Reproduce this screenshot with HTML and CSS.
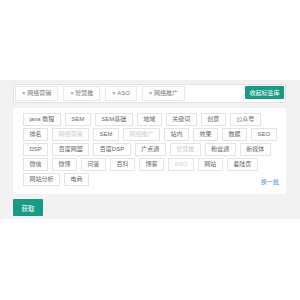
FILE: index.html
```html
<!DOCTYPE html>
<html lang="zh-CN">
<head>
  <meta charset="UTF-8" />
  <meta name="viewport" content="width=device-width, initial-scale=1.0"/>
  <title>标签选择</title>
  <link rel="stylesheet" href="styles.css">
</head>
<body>
  <div class="section">
    <div class="picked">
      <div class="picked-tags">
        <span class="chip">× 网络营销</span>
        <span class="chip">× 智慧推</span>
        <span class="chip">× ASO</span>
        <span class="chip">× 网络推广</span>
      </div>
      <button class="btn btn-small">收起标签库</button>
    </div>

    <div class="library">
      <span class="tag">java 教程</span>
      <span class="tag">SEM</span>
      <span class="tag">SEM基础</span>
      <span class="tag">地域</span>
      <span class="tag">关键词</span>
      <span class="tag">创意</span>
      <span class="tag">公众号</span>

      <span class="tag">排名</span>
      <span class="tag off">网络营销</span>
      <span class="tag">SEM</span>
      <span class="tag off">网络推广</span>
      <span class="tag">站内</span>
      <span class="tag">效果</span>
      <span class="tag">数据</span>
      <span class="tag">SEO</span>

      <span class="tag">DSP</span>
      <span class="tag">百度网盟</span>
      <span class="tag">百度DSP</span>
      <span class="tag">广点通</span>
      <span class="tag off">智慧推</span>
      <span class="tag">粉丝通</span>
      <span class="tag">新媒体</span>

      <span class="tag">微信</span>
      <span class="tag">微博</span>
      <span class="tag">问答</span>
      <span class="tag">百科</span>
      <span class="tag">博客</span>
      <span class="tag off">ASO</span>
      <span class="tag">网站</span>
      <span class="tag">着陆页</span>

      <span class="tag">网站分析</span>
      <span class="tag">电商</span>
      <a class="more" href="#">换一批</a>
    </div>

    <button class="btn btn-get">获取</button>
  </div>
</body>
</html>
```

FILE: styles.css
```css
body {
  margin: 0;
  background: #fff;
  font-family: "Liberation Sans", "Noto Sans CJK SC", sans-serif;
  color: #666;
}

.section {
  margin-top: 80px;
  background: #f2f2f2;
  padding: 4px 14px 3px 13px;
  display: flex;
  flex-direction: column;
  align-items: flex-start;
  gap: 5px;
}

.picked {
  align-self: stretch;
  height: 19px;
  box-sizing: border-box;
  background: #fff;
  border: 1px solid #e3e3e3;
  display: flex;
  align-items: center;
  justify-content: space-between;
  padding: 0 1px;
}

.picked-tags {
  display: flex;
  gap: 5px;
}

.chip {
  height: 15px;
  box-sizing: border-box;
  border: 1px solid #e8e8e8;
  padding: 0 6px;
  font-size: 6px;
  line-height: 13px;
  color: #777;
  white-space: nowrap;
}

.btn {
  border: none;
  background: #179b87;
  color: #fff;
  font-family: inherit;
  padding: 0;
  border-radius: 1px;
  cursor: pointer;
}

.btn-small {
  width: 39px;
  height: 13px;
  font-size: 6px;
  margin-top: -2px;
}

.btn-get {
  width: 30px;
  height: 17px;
  font-size: 6.5px;
}

.library {
  align-self: stretch;
  background: #fff;
  padding: 5px 7px 8px 10px;
  display: flex;
  flex-wrap: wrap;
  gap: 2px 4px;
}

.tag {
  height: 13px;
  box-sizing: border-box;
  border: 1px solid #e4e4e4;
  padding: 0 5.5px;
  font-size: 6px;
  line-height: 11px;
  color: #666;
  white-space: nowrap;
}

.tag.off {
  color: #cdcdcd;
}

.more {
  margin-left: auto;
  align-self: flex-end;
  font-size: 6px;
  line-height: 8px;
  color: #3f8fe0;
  text-decoration: none;
}
```
